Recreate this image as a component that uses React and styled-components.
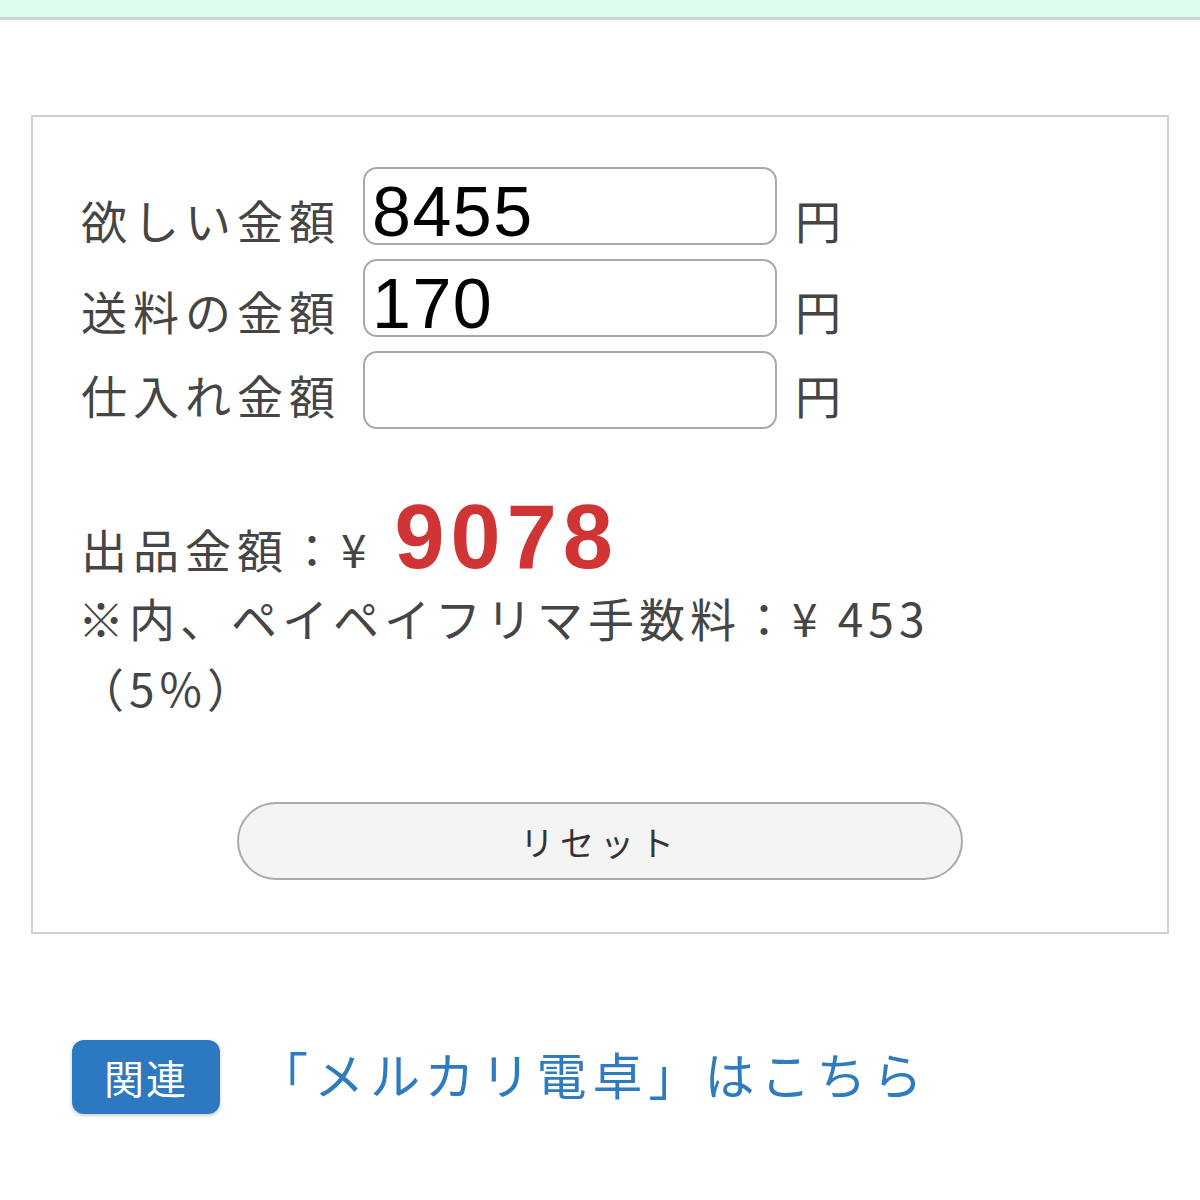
import React from 'react';
import styled, { createGlobalStyle } from 'styled-components';

const GlobalStyle = createGlobalStyle`
  html, body {
    margin: 0;
    padding: 0;
    background: #fff;
    font-family: "Noto Sans CJK JP", "Noto Sans", sans-serif;
  }
`;

const TopBand = styled.div`
  height: 17px;
  background: #dcfdec;
  border-bottom: 3px solid #cfd6d3;
`;

const Page = styled.div`
  padding: 95px 31px 0 31px;
`;

const Calculator = styled.div`
  border: 2px solid #d0d0d0;
  padding: 50px 50px 50px 50px;
  height: 819px;
  box-sizing: border-box;
`;

const Row = styled.div`
  display: flex;
  align-items: flex-end;
  margin-bottom: 14px;
`;

const Label = styled.div`
  font-size: 46px;
  letter-spacing: 6px;
  color: #454545;
  line-height: 1;
  width: 280px;
  white-space: nowrap;
  margin-left: -2px;
  padding-right: 2px;
  padding-bottom: ${({ $drop }) => $drop}px;
`;

const AmountInput = styled.input`
  width: 414px;
  height: 78px;
  box-sizing: border-box;
  border: 2px solid #a9a9a9;
  border-radius: 14px;
  padding: 12px 7px 0 7px;
  font-family: "Liberation Sans", Arial, sans-serif;
  font-size: 70px;
  letter-spacing: 1.5px;
  color: #000;
  background: #fff;
  outline: none;
`;

const Yen = styled.div`
  font-size: 46px;
  color: #454545;
  line-height: 1;
  margin-left: 18px;
  padding-bottom: ${({ $drop }) => $drop}px;
`;

const Result = styled.div`
  margin-top: 63px;
  display: flex;
  align-items: baseline;
  color: #454545;
  font-size: 46px;
  letter-spacing: 6px;
  margin-left: -2px;
`;

const Price = styled.span`
  font-family: "Liberation Sans", Arial, sans-serif;
  font-weight: bold;
  font-size: 90px;
  color: #d03434;
  letter-spacing: 6px;
  margin-left: 22px;
  line-height: 1;
`;

const Note = styled.div`
  color: #454545;
  font-size: 46px;
  letter-spacing: 5px;
  line-height: 70px;
  margin-top: 0;
  margin-left: -5px;
`;

const NoteLine = styled.span`
  display: block;
  white-space: nowrap;
`;

const ResetButton = styled.button`
  display: block;
  margin: 80px auto 0;
  width: 726px;
  height: 78px;
  border: 2px solid #ababab;
  border-radius: 40px;
  background: #f4f4f4;
  font-family: "Noto Sans CJK JP", sans-serif;
  font-size: 34px;
  letter-spacing: 6px;
  color: #333;
  cursor: pointer;
`;

const Related = styled.div`
  display: flex;
  align-items: center;
  margin-top: 103px;
  padding-left: 41px;
`;

const Badge = styled.span`
  display: inline-flex;
  align-items: center;
  justify-content: center;
  width: 148px;
  height: 74px;
  border-radius: 12px;
  background: #2c79c2;
  color: #fff;
  font-size: 40px;
  letter-spacing: 2px;
  box-shadow: 0 2px 4px rgba(0, 0, 0, 0.2);
`;

const RelatedLink = styled.a`
  margin-left: 38px;
  margin-bottom: 8px;
  font-size: 50px;
  letter-spacing: 6px;
  color: #2f7bbf;
  text-decoration: none;
`;

const fields = [
  { label: '欲しい金額', value: '8455', drop: 3 },
  { label: '送料の金額', value: '170', drop: 4 },
  { label: '仕入れ金額', value: '', drop: 12 },
];

export default function App() {
  return (
    <>
      <GlobalStyle />
      <TopBand />
      <Page>
        <Calculator>
          {fields.map((f) => (
            <Row key={f.label}>
              <Label $drop={f.drop}>{f.label}</Label>
              <AmountInput defaultValue={f.value} />
              <Yen $drop={f.drop}>円</Yen>
            </Row>
          ))}
          <Result>
            出品金額：¥<Price>9078</Price>
          </Result>
          <Note>
            <NoteLine>※内、ペイペイフリマ手数料：¥ 453</NoteLine>
            <NoteLine>（5%）</NoteLine>
          </Note>
          <ResetButton type="button">リセット</ResetButton>
        </Calculator>
        <Related>
          <Badge>関連</Badge>
          <RelatedLink href="#">「メルカリ電卓」はこちら</RelatedLink>
        </Related>
      </Page>
    </>
  );
}
